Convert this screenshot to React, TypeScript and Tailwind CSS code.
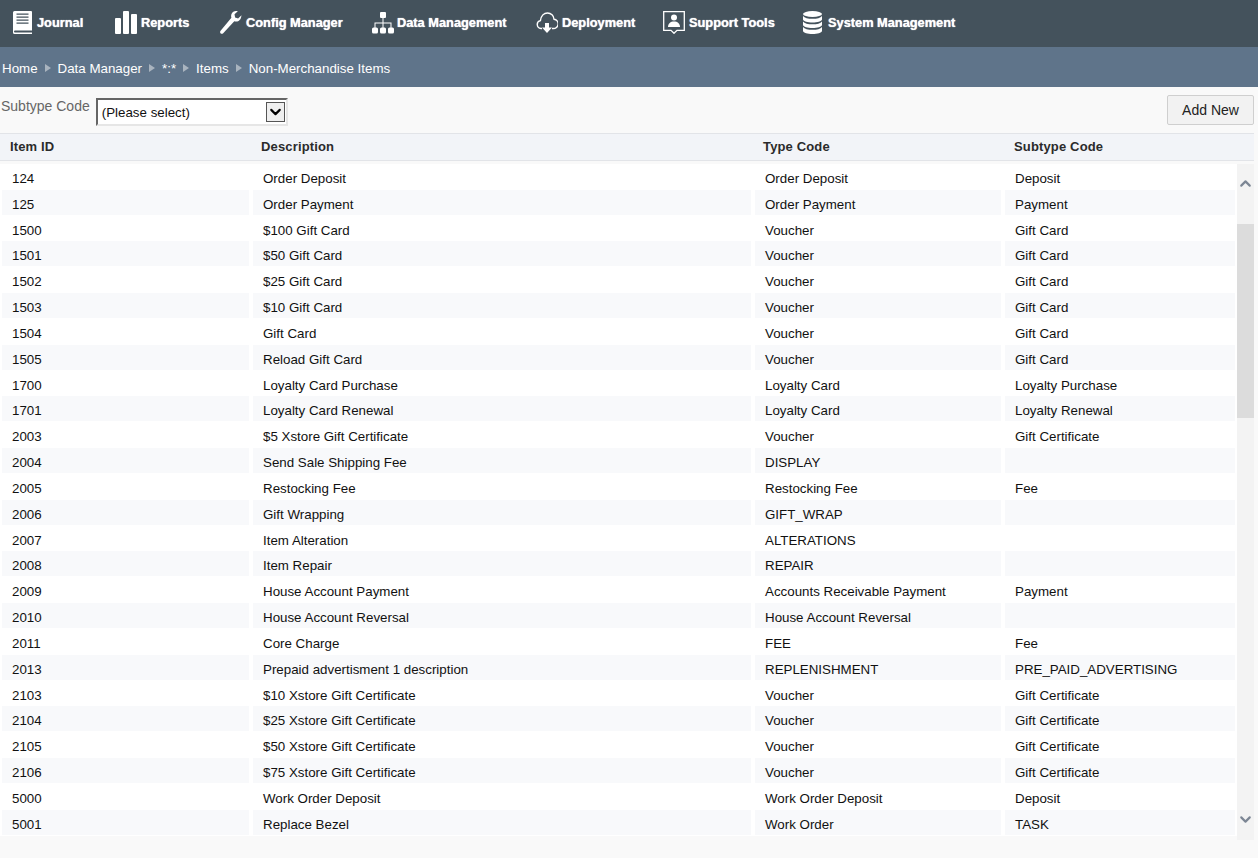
import { ChevronUp, ChevronDown } from "lucide-react";

const rows = [
  ["124", "Order Deposit", "Order Deposit", "Deposit"],
  ["125", "Order Payment", "Order Payment", "Payment"],
  ["1500", "$100 Gift Card", "Voucher", "Gift Card"],
  ["1501", "$50 Gift Card", "Voucher", "Gift Card"],
  ["1502", "$25 Gift Card", "Voucher", "Gift Card"],
  ["1503", "$10 Gift Card", "Voucher", "Gift Card"],
  ["1504", "Gift Card", "Voucher", "Gift Card"],
  ["1505", "Reload Gift Card", "Voucher", "Gift Card"],
  ["1700", "Loyalty Card Purchase", "Loyalty Card", "Loyalty Purchase"],
  ["1701", "Loyalty Card Renewal", "Loyalty Card", "Loyalty Renewal"],
  ["2003", "$5 Xstore Gift Certificate", "Voucher", "Gift Certificate"],
  ["2004", "Send Sale Shipping Fee", "DISPLAY", ""],
  ["2005", "Restocking Fee", "Restocking Fee", "Fee"],
  ["2006", "Gift Wrapping", "GIFT_WRAP", ""],
  ["2007", "Item Alteration", "ALTERATIONS", ""],
  ["2008", "Item Repair", "REPAIR", ""],
  ["2009", "House Account Payment", "Accounts Receivable Payment", "Payment"],
  ["2010", "House Account Reversal", "House Account Reversal", ""],
  ["2011", "Core Charge", "FEE", "Fee"],
  ["2013", "Prepaid advertisment 1 description", "REPLENISHMENT", "PRE_PAID_ADVERTISING"],
  ["2103", "$10 Xstore Gift Certificate", "Voucher", "Gift Certificate"],
  ["2104", "$25 Xstore Gift Certificate", "Voucher", "Gift Certificate"],
  ["2105", "$50 Xstore Gift Certificate", "Voucher", "Gift Certificate"],
  ["2106", "$75 Xstore Gift Certificate", "Voucher", "Gift Certificate"],
  ["5000", "Work Order Deposit", "Work Order Deposit", "Deposit"],
  ["5001", "Replace Bezel", "Work Order", "TASK"],
];

const JournalIcon = () => (
  <svg width="19" height="23" viewBox="0 0 19 23" fill="#fff">
    <path d="M1.500 0H18a1 1 0 0 1 1 1v18.500H2a1 1 0 0 0-1 1 1 1 0 0 0 1 1h17V23H1.500A1.500 1.500 0 0 1 0 21.500V1.500A1.500 1.500 0 0 1 1.500 0z" />
    <path d="M3.500 2.500h12v1.300h-12zM3.500 5.500h12v1.300h-12zM3.500 8.500h12v1.300h-12zM3.500 11.500h12v1.300h-12z" fill="#44525c" />
  </svg>
);

const ReportsIcon = () => (
  <svg width="22" height="23" viewBox="0 0 22 23" fill="#fff">
    <rect x="0" y="7" width="6" height="16" rx="1" />
    <rect x="8" y="0" width="6" height="23" rx="1" />
    <rect x="16" y="3" width="6" height="20" rx="1" />
  </svg>
);

const WrenchIcon = () => (
  <svg width="22" height="23" viewBox="0 0 22 23" fill="#fff">
    <path d="M21.500 4.200l-3.400 3.200-3-1-.6-3.200L17.800.2c-2.600-.7-5.300.4-6.300 2.900-.5 1.300-.5 2.600-.1 3.700L.6 19.800c-.8 1-.6 2 .1 2.600.7.600 1.700.6 2.500-.2L14.300 10.300c2.600.7 5-.3 6.200-2.400.6-1.200.9-2.500 1-3.700z" />
  </svg>
);

const TreeIcon = () => (
  <svg width="22" height="22" viewBox="0 0 22 22" fill="#fff">
    <rect x="8" y="0" width="6" height="6" rx="1" />
    <rect x="0" y="15.500" width="6" height="6" rx="1.500" />
    <rect x="8" y="15.500" width="6" height="6" rx="1.500" />
    <rect x="16" y="15.500" width="6" height="6" rx="1.500" />
    <path d="M10.500 6h1v4.500H19.500V16h-1v-4.500h-7V16h-1v-4.500h-7V16h-1v-5.500h8z" />
  </svg>
);

const CloudIcon = () => (
  <svg width="22" height="22" viewBox="0 0 22 22" fill="none">
    <path d="M6 16.500H5a4 4 0 0 1-.6-7.900C5 4 8 1 11.500 1c3.600 0 6.300 2.900 6.500 6.200a4.600 4.600 0 0 1-1 9.300h-1" stroke="#fff" strokeWidth="1.400" />
    <path d="M9 11h4v4.500h3L11 21l-5-5.500h3z" fill="#fff" />
  </svg>
);

const SupportIcon = () => (
  <svg width="22" height="23" viewBox="0 0 22 23" fill="none">
    <path d="M.7.7h20.600v18.600H14l-3 3-3-3H.7z" stroke="#fff" strokeWidth="1.300" />
    <circle cx="11" cy="6.500" r="3" fill="#fff" />
    <path d="M5 16c0-3.500 2.500-5.500 6-5.500s6 2 6 5.500z" fill="#fff" />
  </svg>
);

const DatabaseIcon = () => (
  <svg width="19" height="23" viewBox="0 0 19 23" fill="#fff">
    <ellipse cx="9.500" cy="3" rx="9.500" ry="3" />
    <path d="M0 5c1.500 2 5 2.800 9.500 2.800S17.500 7 19 5v3.500c-.5 2-4.500 3-9.500 3s-9-1-9.500-3z" />
    <path d="M0 10.500c1.500 2 5 2.800 9.500 2.800s8-.8 9.500-2.800V14c-.5 2-4.500 3-9.500 3s-9-1-9.500-3z" />
    <path d="M0 16c1.500 2 5 2.800 9.500 2.800S17.500 18 19 16v4c-.5 2-4.500 3-9.500 3s-9-1-9.500-3z" />
  </svg>
);

const navItems = [
  { label: "Journal", icon: <JournalIcon />, box: "w-[102px] gap-[5px]" },
  { label: "Reports", icon: <ReportsIcon />, box: "w-[105px] gap-[4px]" },
  { label: "Config Manager", icon: <WrenchIcon />, box: "w-[152px] gap-[4px]" },
  { label: "Data Management", icon: <TreeIcon />, box: "w-[164px] gap-[3px]" },
  { label: "Deployment", icon: <CloudIcon />, box: "w-[127px] gap-[4px]" },
  { label: "Support Tools", icon: <SupportIcon />, box: "w-[140px] gap-[4px]" },
  { label: "System Management", icon: <DatabaseIcon />, box: "gap-[6px]" },
];

const crumbs = ["Home", "Data Manager", "*:*", "Items", "Non-Merchandise Items"];

const Cell = ({ text, striped }: { text: string; striped: boolean }) => (
  <div className={`ml-[2px] mr-[2px] mb-px overflow-hidden pt-[5px] pl-[10px] whitespace-nowrap ${striped ? "bg-[#f8f9fb]" : ""}`}>
    {text}
  </div>
);

export default function App() {
  return (
    <main className="flex h-[858px] flex-col overflow-hidden bg-[#f9f9f9] font-['Liberation_Sans',Arial,sans-serif]">
      {/* Main menu */}
      <nav className="flex h-[47px] items-center bg-[#44525c] pb-[2px] pl-[13px] text-[12.8px] font-bold text-white [text-shadow:0_0_1px_#fff]">
        {navItems.map((item) => (
          <div key={item.label} className={`flex shrink-0 items-center ${item.box}`}>
            {item.icon}
            <span>{item.label}</span>
          </div>
        ))}
      </nav>

      {/* Breadcrumb */}
      <div className="flex h-10 items-center gap-[7px] bg-[#5f748a] pt-[3px] pl-[2px] text-[13.33px] text-white">
        {crumbs.map((crumb, index) => (
          <div key={crumb} className="flex items-center gap-[7px]">
            {index > 0 && <span className="h-0 w-0 border-y-4 border-l-[6px] border-y-transparent border-l-[#a9b4bf]" />}
            <span>{crumb}</span>
          </div>
        ))}
      </div>

      {/* Filter bar */}
      <div className="flex h-[46px] justify-between pr-[4px] pl-px">
        <div className="flex gap-[6px] pt-[11px]">
          <label className="text-[14px] leading-4 text-[#666]">Subtype Code</label>
          <div className="relative h-[28px] w-[192px]">
            <select className="h-full w-full appearance-none border-2 border-t-[#666] border-r-[#e6e6e6] border-b-[#e6e6e6] border-l-[#666] bg-white pt-px pl-[4px] text-[13.33px] text-[#111]">
              <option>(Please select)</option>
            </select>
            <span className="pointer-events-none absolute top-[4px] right-[3px] flex h-[20px] w-[19px] items-center justify-center border border-[#555] bg-[#efefef]">
              <ChevronDown className="h-[18px] w-[18px] text-black" strokeWidth={3} />
            </span>
          </div>
        </div>
        <button className="mt-[8px] h-[30px] w-[87px] rounded-[2px] border border-[#cfcfcf] bg-[#f2f2f2] text-[14px] text-[#222]">
          Add New
        </button>
      </div>

      {/* Table */}
      <div className="mr-[4px] flex flex-col">
        <div className="grid h-[28px] grid-cols-[251px_502px_250px_1fr] items-center border-y border-[#e2e4e8] bg-[#f2f4f8] text-[13px] font-bold tracking-[0.15px] text-[#2b2b2b]">
          <div className="pl-[10px]">Item ID</div>
          <div className="pl-[10px]">Description</div>
          <div className="pl-[10px]">Type Code</div>
          <div className="pl-[11px]">Subtype Code</div>
        </div>
        <div className="mt-[3px] flex h-[676px]">
          <div className="flex-1 self-start bg-white">
            {rows.map((row, index) => (
              <div key={row[0]} className="grid h-[25.84px] grid-cols-[251px_502px_250px_1fr] text-[13.33px] text-[#111]">
                {row.map((text, col) => (
                  <Cell key={col} text={text} striped={index % 2 === 1} />
                ))}
              </div>
            ))}
          </div>
          <div className="relative flex w-[17px] flex-col justify-between bg-[#f3f3f3] py-[6px]">
            <ChevronUp className="mt-[5px] h-[17px] w-[17px] text-[#7c8694]" strokeWidth={3} />
            <div className="absolute top-[60px] left-0 h-[194px] w-full bg-[#dcdcdc]" />
            <ChevronDown className="mb-[6px] h-[17px] w-[17px] text-[#7c8694]" strokeWidth={3} />
          </div>
        </div>
      </div>
    </main>
  );
}
